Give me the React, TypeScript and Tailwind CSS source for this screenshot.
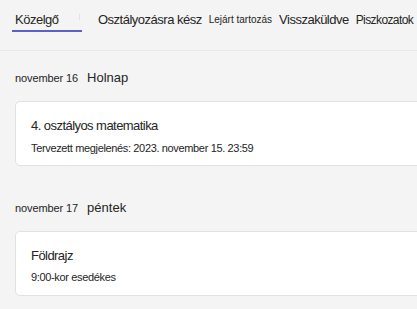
export default function App() {
  const tabs = [
    { label: "Osztályozásra kész", cls: "text-[13px] tracking-[-0.5px] ml-[18px]" },
    { label: "Lejárt tartozás", cls: "text-[10px] ml-[7px]" },
    { label: "Visszaküldve", cls: "text-[13px] tracking-[-0.5px] ml-[7px]" },
    { label: "Piszkozatok", cls: "text-[12px] tracking-[-0.6px] ml-[7px]" },
  ];

  return (
    <div className="w-[417px] h-[309px] overflow-hidden bg-[#f4f4f4] text-[#242424] font-['Liberation_Sans',sans-serif]">
      {/* tabs */}
      <div className="h-[51px] border-b border-[#e8e8e8] flex items-start pl-[12px] whitespace-nowrap">
        <div className="flex flex-col">
          <span className="text-[13px] tracking-[-0.5px] px-[3px] pt-[11px] h-[30px] leading-[18px]">Közelgő</span>
          <div className="h-[2px] w-[70px] bg-[#5b5fc7]" />
        </div>
        <div className="w-px h-[6px] bg-[#e2e2e2] mt-[14px] -ml-[3px]" />
        {tabs.map((t) => (
          <span key={t.label} className={`${t.cls} pt-[11px] leading-[18px]`}>
            {t.label}
          </span>
        ))}
      </div>

      <Group date="november 16" day="Holnap">
        <div className="text-[13px] tracking-[-0.55px] leading-[18px]">4. osztályos matematika</div>
        <div className="text-[11px] tracking-[-0.35px] leading-[14px] mt-[6px]">
          Tervezett megjelenés: 2023. november 15. 23:59
        </div>
      </Group>

      <Group date="november 17" day="péntek">
        <div className="text-[13px] tracking-[-0.55px] leading-[18px]">Földrajz</div>
        <div className="text-[11px] tracking-[-0.35px] leading-[14px] mt-[5px]">9:00-kor esedékes</div>
      </Group>
    </div>
  );
}

function Group({ date, day, children }: { date: string; day: string; children: React.ReactNode }) {
  return (
    <div className="pl-[15px] pt-[17px] pb-[15px]">
      <div className="flex items-center h-[20px] whitespace-nowrap">
        <span className="text-[11px] tracking-[-0.1px]">{date}</span>
        <span className="text-[13px] ml-[9px]">{day}</span>
      </div>
      <div className="mt-[13px] w-[440px] h-[65px] bg-white border border-[#e1e1e1] rounded-[5px] pl-[15px] pt-[15px]">
        {children}
      </div>
    </div>
  );
}
